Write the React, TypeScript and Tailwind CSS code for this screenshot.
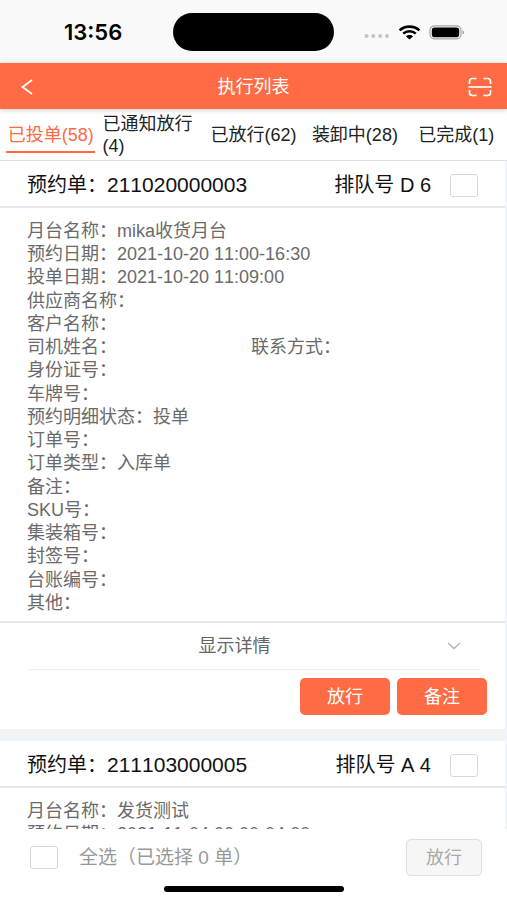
import React, { useState } from "react";
import clsx from "clsx";

type Field = { label: string; value?: string };
type Order = { no: string; queue: string; rows: Field[][] };

const tabs = ["已投单(58)", "已通知放行(4)", "已放行(62)", "装卸中(28)", "已完成(1)"];

const orders: Order[] = [
  {
    no: "211020000003",
    queue: "D 6",
    rows: [
      [{ label: "月台名称", value: "mika收货月台" }],
      [{ label: "预约日期", value: "2021-10-20 11:00-16:30" }],
      [{ label: "投单日期", value: "2021-10-20 11:09:00" }],
      [{ label: "供应商名称" }],
      [{ label: "客户名称" }],
      [{ label: "司机姓名" }, { label: "联系方式" }],
      [{ label: "身份证号" }],
      [{ label: "车牌号" }],
      [{ label: "预约明细状态", value: "投单" }],
      [{ label: "订单号" }],
      [{ label: "订单类型", value: "入库单" }],
      [{ label: "备注" }],
      [{ label: "SKU号" }],
      [{ label: "集装箱号" }],
      [{ label: "封签号" }],
      [{ label: "台账编号" }],
      [{ label: "其他" }],
    ],
  },
  {
    no: "211103000005",
    queue: "A 4",
    rows: [
      [{ label: "月台名称", value: "发货测试" }],
      [{ label: "预约日期", value: "2021-11-04 00:00-04:00" }],
    ],
  },
];

const StatusBar = () => (
  <div className="grid h-[63px] shrink-0 grid-cols-[1fr_161px_1fr] items-center bg-[#f9f9f9] pt-px">
    <span className="pl-[64px] font-['Inter',sans-serif] text-[22px] font-semibold leading-6 text-black">
      13:56
    </span>
    <div className="h-[38px] rounded-full bg-black" />
    <div className="flex items-center pl-[30px]">
      <svg width="26" height="14" viewBox="0 0 26 14" fill="#c4c4c4">
        <circle cx="2.5" cy="11" r="2" />
        <circle cx="9.3" cy="11" r="2" />
        <circle cx="16.1" cy="11" r="2" />
        <circle cx="22.9" cy="11" r="2" />
      </svg>
      <svg className="ml-2" width="23" height="15" viewBox="0 0 23 15" fill="none" stroke="#000">
        <path d="M1.6 5.4C7 .4 16 .4 21.4 5.4" strokeWidth="2.6" />
        <path d="M5.2 8.6c3.4-3.1 9.2-3.1 12.6 0" strokeWidth="2.5" />
        <path d="M8 11.4c1.8-1.8 5.2-1.8 7 0L11.5 14.4z" fill="#000" stroke="none" />
      </svg>
      <svg className="ml-2" width="36" height="15" viewBox="0 0 36 15">
        <rect x="1" y="0.9" width="31" height="13" rx="4.2" fill="none" stroke="#a6a6a6" strokeWidth="1.2" />
        <rect x="2.8" y="2.6" width="27.4" height="9.6" rx="2.8" fill="#000" />
        <path d="M33.6 5.3c1.8.8 1.8 3.4 0 4.2z" fill="#8a8a8a" />
      </svg>
    </div>
  </div>
);

const Header = () => (
  <header className="z-10 grid h-[46px] shrink-0 grid-cols-[1fr_auto_1fr] items-center bg-[#ff6b45] pt-px text-white shadow-[0_1px_5px_rgba(0,0,0,0.2)]">
    <button type="button" aria-label="返回" className="justify-self-start pl-[20px]">
      <svg width="14" height="16" viewBox="0 0 14 16" fill="none" stroke="currentColor" strokeWidth="1.8">
        <path d="M12 1 2.5 8 12 15" />
      </svg>
    </button>
    <h1 className="text-[18px] leading-6">执行列表</h1>
    <button type="button" aria-label="扫码" className="justify-self-end pr-[15px]">
      <svg width="24" height="20" viewBox="0 0 24 20" fill="none" stroke="currentColor" strokeWidth="1.7">
        <path d="M1.5 7V4.5Q1.5 1.5 4.5 1.5H8.5M15.5 1.5H19.5Q22.5 1.5 22.5 4.5V7" />
        <path d="M1.5 13V15.5Q1.5 18.5 4.5 18.5H8.5M15.5 18.5H19.5Q22.5 18.5 22.5 15.5V13" />
        <path d="M.5 10H23.5" />
      </svg>
    </button>
  </header>
);

const boxClass =
  "h-[23px] w-[28px] shrink-0 appearance-none rounded-[3px] border border-[#d8d8da] bg-white checked:border-[#ff6b45] checked:bg-[#ff6b45]";

type CardProps = { order: Order; checked: boolean; onToggle: () => void };

const OrderCard = ({ order, checked, onToggle }: CardProps) => {
  const buttonClass = "h-[37px] w-[90px] rounded-[5px] bg-[#ff6b45] text-[18px] leading-6 text-white";

  return (
    <article className="mr-[2px] bg-white">
      <div className="flex h-[47px] items-center border-b-2 border-[#e6e7e9] pl-[27px] pr-[27px] pt-[3px] text-[20px] leading-6 text-[#111]">
        <h2 className="flex-1">
          预约单：<span className="text-[21px]">{order.no}</span>
        </h2>
        <label htmlFor={order.no} className="mr-[19px]">排队号 {order.queue}</label>
        <input id={order.no} type="checkbox" checked={checked} onChange={onToggle} className={boxClass} />
      </div>
      <div className="border-b-2 border-[#e6e7e9] pb-[6px] pl-[27px] pr-[30px] pt-3">
        <div
          className={clsx(
            "grid text-[18px] leading-[23px] text-[#6a6a6a]",
            order.rows.length > 10 && "min-h-[395px]"
          )}
        >
          {order.rows.map((row) => (
            <div key={row[0].label} className="grid grid-cols-2">
              {row.map((f) => (
                <p key={f.label} className={row.length === 1 ? "col-span-2" : ""}>
                  {f.label}：{f.value}
                </p>
              ))}
            </div>
          ))}
        </div>
      </div>
      <div className="pl-[28px] pr-[25px]">
        <button
          type="button"
          className="flex h-[47px] w-full items-center gap-[6px] border-b border-[#ececec] pr-[19px] text-[18px] leading-6 text-[#666]"
        >
          <span className="flex-1 text-center">显示详情</span>
          <svg width="14" height="8" viewBox="0 0 14 8" fill="none" stroke="#b5b5b5" strokeWidth="1.3">
            <path d="M1 1l6 5.5L13 1" />
          </svg>
        </button>
      </div>
      <div className="flex justify-end gap-[7px] pb-[14px] pr-[18px] pt-2">
        <button type="button" className={buttonClass}>放行</button>
        <button type="button" className={buttonClass}>备注</button>
      </div>
    </article>
  );
};

export default function App() {
  const [activeTab, setActiveTab] = useState(0);
  const [selected, setSelected] = useState<string[]>([]);

  const toggle = (no: string) =>
    setSelected((prev) => (prev.includes(no) ? prev.filter((n) => n !== no) : [...prev, no]));

  const allSelected = selected.length === orders.length;

  return (
    <div className="flex h-screen flex-col overflow-hidden bg-white font-['Liberation_Sans','Noto_Sans_CJK_SC',sans-serif] [font-kerning:none]">
      <StatusBar />
      <Header />

      {/* Tabs */}
      <nav className="grid h-[52px] shrink-0 grid-cols-5 items-center border-b border-[#dfe0e2] bg-white pt-px text-[18px] leading-[22px] text-[#222]">
        {tabs.map((tab, i) => (
          <button
            key={tab}
            type="button"
            onClick={() => setActiveTab(i)}
            className={clsx(
              "flex h-9 items-center justify-center",
              i === activeTab && "mx-[6px] border-y-2 border-t-transparent border-b-[#ff6b45] text-[#ff6b45]"
            )}
          >
            <span className={tab.length > 7 ? "pl-px text-left" : "whitespace-nowrap"}>{tab}</span>
          </button>
        ))}
      </nav>

      {/* Order list */}
      <main className="flex min-h-0 flex-1 flex-col gap-3 overflow-hidden bg-[#f1f4f6]">
        {orders.map((order) => (
          <OrderCard
            key={order.no}
            order={order}
            checked={selected.includes(order.no)}
            onToggle={() => toggle(order.no)}
          />
        ))}
      </main>

      {/* Bottom bar */}
      <footer className="shrink-0 bg-white pb-2 pt-[10px]">
        <div className="flex items-center pl-[30px] pr-[25px]">
          <input
            id="all"
            type="checkbox"
            checked={allSelected}
            onChange={() => setSelected(allSelected ? [] : orders.map((o) => o.no))}
            className={boxClass}
          />
          <label htmlFor="all" className="ml-[21px] flex-1 text-[19px] leading-6 text-[#999]">
            全选（已选择 {selected.length} 单）
          </label>
          <button
            type="button"
            disabled={selected.length === 0}
            className="h-[37px] w-[76px] rounded-[5px] border border-[#dedede] bg-[#f6f6f6] text-[18px] leading-6 text-[#aaa]"
          >
            放行
          </button>
        </div>
        <div className="mx-auto mt-[10px] h-[6px] w-[180px] rounded-full bg-black" />
      </footer>
    </div>
  );
}
